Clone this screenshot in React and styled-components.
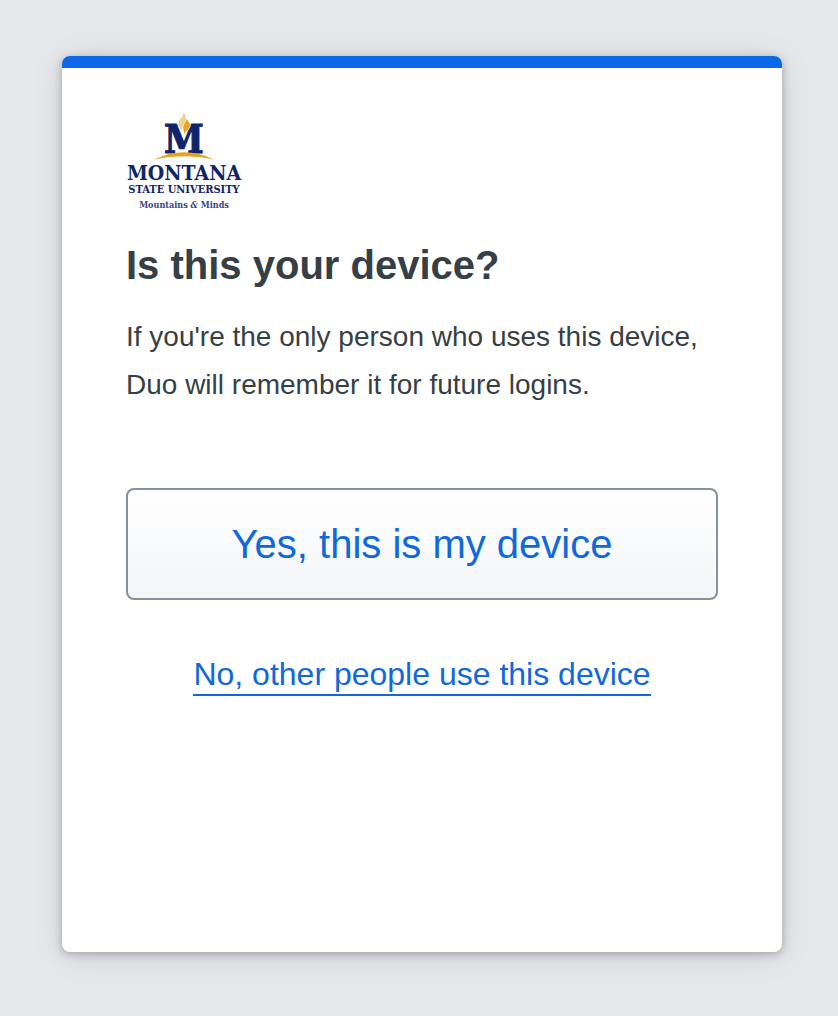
import styled, { createGlobalStyle } from "styled-components";

const GlobalStyle = createGlobalStyle`
  * {
    box-sizing: border-box;
  }

  body {
    margin: 0;
    background: #E7E8EC;
    font-family: "Liberation Sans", Arial, sans-serif;
    color: #363F45;
  }
`;

const Page = styled.main`
  min-height: 100vh;
  display: flex;
  padding: 56px 56px 64px 62px;
`;

const Card = styled.section`
  width: 100%;
  display: flex;
  flex-direction: column;
  background: #FFFFFF;
  border-radius: 8px;
  overflow: hidden;
  box-shadow: 0 2px 8px #00000040, 0 4px 32px #0000001F;
`;

const Accent = styled.div`
  height: 12px;
  background: #0C68E8;
`;

const Content = styled.div`
  display: flex;
  flex-direction: column;
  padding: 44px 64px;
`;

const Logo = styled.svg`
  width: 116px;
  height: 98px;
  overflow: visible;
`;

const LogoText = styled.text`
  font-family: "DejaVu Serif Condensed", "DejaVu Serif", serif;
  font-size: ${({ $size }) => $size}px;
  font-weight: bold;
  fill: ${({ $light }) => ($light ? "#35477C" : "#10246B")};
  stroke: #10246B;
  stroke-width: ${({ $heavy }) => ($heavy ? 1 : 0)}px;
  text-anchor: middle;
`;

const Title = styled.h1`
  margin: 31px 0 24px;
  font-size: 40px;
  line-height: 48px;
  font-weight: bold;
`;

const Description = styled.p`
  margin: 0 0 79px;
  font-size: 28px;
  line-height: 48px;
`;

const ConfirmButton = styled.button`
  width: 100%;
  padding: 30px 16px;
  background: linear-gradient(#FFFFFF, #F3F5F8);
  border: 2px solid #87909B;
  border-radius: 8px;
  color: #1068DC;
  font-family: inherit;
  font-size: 40px;
  line-height: 48px;
  cursor: pointer;
`;

const DeclineLink = styled.a`
  align-self: center;
  margin-top: 54px;
  border-bottom: 2px solid #1068DC;
  color: #1068DC;
  font-size: 32px;
  line-height: 40px;
  text-decoration: none;
`;

const UniversityLogo = () => (
  <Logo viewBox="0 0 116 98" role="img" aria-label="Montana State University">
    <LogoText x="58" y="41" $size={40} $heavy>M</LogoText>
    <path
      d="M57.5 0C58 5 53 7 53 12C53 16 57 18 58.5 22C60 18 64.5 17 64 13C63.5 10 60 9 60.5 5Z"
      fill="#FFFFFF"
      stroke="#FFFFFF"
      strokeWidth="1"
    />
    <path d="M57.5 0C58 5 52 7 52.5 12C53 15 55 17 56.5 19C55 13 61 10 60 5C60 3 58 2 57.5 0Z" fill="#F0D28A" />
    <path d="M60.5 6C61 10 56 13 57.5 17C57.5 19 58 20 58.5 22C60 18 64 17 64 13C64 10 61 9 60.5 6Z" fill="#E6A520" />
    <path d="M28 47.5Q58 33 88 47.5Q58 41 28 47.5Z" fill="#E6A520" />
    <LogoText x="58" y="68" $size={21}>MONTANA</LogoText>
    <LogoText x="58" y="81" $size={11}>STATE UNIVERSITY</LogoText>
    <LogoText x="58" y="96" $size={9} $light>
      Mountains <tspan fontStyle="italic">&amp;</tspan> Minds
    </LogoText>
  </Logo>
);

const App = () => (
  <>
    <GlobalStyle />
    <Page>
      <Card>
        <Accent />
        <Content>
          <UniversityLogo />
          <Title>Is this your device?</Title>
          <Description>
            If you're the only person who uses this device, Duo will remember it for future logins.
          </Description>
          <ConfirmButton type="button">Yes, this is my device</ConfirmButton>
          <DeclineLink href="#">No, other people use this device</DeclineLink>
        </Content>
      </Card>
    </Page>
  </>
);

export default App;
